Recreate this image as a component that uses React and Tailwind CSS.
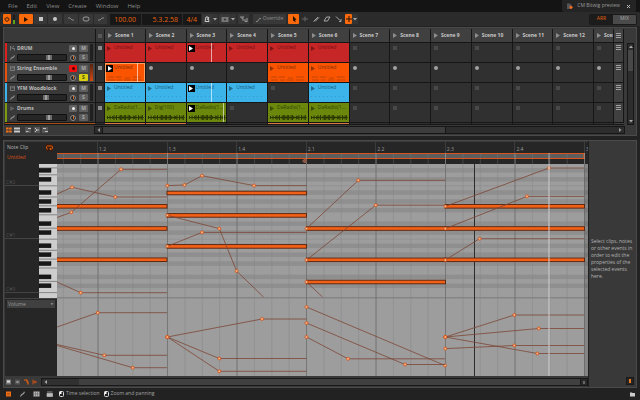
import React from "react";

const RED = "bg-[#c62626]";
const ORANGE = "bg-[#fb5400]";
const BLUE = "bg-[#3cb4ea]";
const GREEN = "bg-[#6b880c]";

const tracks = [
  {
    name: "DRUM", icon: "drum", stripe: "bg-[#e0201c]", color: RED, text: "text-[#701212]", fader: "28px", head: 24,
    clips: { 0: "Untitled", 1: "Untitled", 2: "Untitled", 3: "Untitled", 4: "Untitled", 5: "Untitled" }, playing: 2,
  },
  {
    name: "String Ensemble", icon: "keys", stripe: "bg-[#e8500c]", color: ORANGE, text: "text-[#7c2c04]", fader: "28px", armed: true, head: 32,
    clips: { 0: "Untitled", 4: "Untitled", 5: "Untitled" }, playing: 0, pattern: "notes",
  },
  {
    name: "YFM Woodblock", icon: "keys", stripe: "bg-[#3cb4ea]", color: BLUE, text: "text-[#1a5878]", fader: "25px", head: 24,
    clips: { 0: "Untitled", 1: "Untitled", 2: "Untitled", 3: "Untitled", 5: "Untitled" }, playing: 2, pattern: "dots",
  },
  {
    name: "Drums", icon: "audio", stripe: "bg-[#7c9c0c]", color: GREEN, text: "text-[#333f08]", fader: "28px", head: 36,
    clips: { 0: "DaRadio(1...", 1: "Dig(100)", 2: "DaRadio(1...", 4: "DaRadio(1...", 5: "DaRadio(1..." }, playing: 2, pattern: "wave",
  },
];

const columns = Array.from({ length: 13 }, (_, i) => i);
const sceneGrid = "grid min-w-0 flex-1 grid-cols-[repeat(12,minmax(0,1fr))_20px]";

function Triangle({ className = "" }) {
  return (
    <svg viewBox="0 0 4 5" className={"h-[5px] w-1 shrink-0 " + className} aria-hidden="true">
      <path d="M0 0L4 2.5L0 5Z" fill="currentColor" />
    </svg>
  );
}

function Arrow({ d, className = "" }) {
  return (
    <svg viewBox="0 0 4 4" className={"size-1 shrink-0 " + className} aria-hidden="true">
      <path d={d} fill="currentColor" />
    </svg>
  );
}

const DOWN = "M0 1H4L2 3.5Z";

function MenuBar() {
  return (
    <header className="flex h-3 shrink-0 items-center justify-between bg-[#141414]">
      <nav className="flex gap-[9px] pl-2 text-[6px] leading-3 text-[#8a8a8a]">
        {["File", "Edit", "View", "Create", "Window", "Help"].map((m) => (
          <button key={m} type="button">{m}</button>
        ))}
      </nav>
      <div className="mr-1 flex h-full items-center gap-1 rounded-b-xs bg-[#242424] pr-[5px] pl-[5px] text-[5px] text-[#9a9a9a]">
        <svg viewBox="0 0 6 6" className="size-[6px]" aria-hidden="true">
          <path d="M0 .5H3L4.5 2V6H0Z" fill="#555" />
          <circle cx="4" cy="4.2" r="1.5" fill="#f46a1c" />
        </svg>
        <span>CM Bitwig preview</span>
        <button type="button" aria-label="Close project" className="ml-[2px] text-[#bbb]">
          <svg viewBox="0 0 5 5" className="size-[5px]"><path d="M1 1L4 4M4 1L1 4" stroke="currentColor" /></svg>
        </button>
      </div>
    </header>
  );
}

function ToolButton({ label, active, width, children }) {
  return (
    <button
      type="button"
      aria-label={label}
      className={
        "flex h-[10px] shrink-0 items-center justify-center rounded-[1px] " +
        (active ? "bg-[#fb6a0a] text-[#261000] " : "bg-[#383838] text-[#aaa] ") +
        width
      }
    >
      {children}
    </button>
  );
}

function Glyph({ children }) {
  return (
    <svg viewBox="0 0 8 8" className="size-2 shrink-0" fill="none" stroke="currentColor" strokeWidth="1" aria-hidden="true">
      {children}
    </svg>
  );
}

function Toolbar() {
  return (
    <div className="flex h-[14px] shrink-0 items-center rounded-t-xs bg-[#2b2b2b] pr-1 pl-[3px]">
      <ToolButton label="Audio engine" active width="w-2">
        <Glyph><path d="M4 1.8V4M2.8 2.6a2 2 0 1 0 2.4 0" strokeWidth=".9" /></Glyph>
      </ToolButton>
      <div className="ml-[2px] flex h-[9px] w-[2px] items-end bg-[#1c1c1c]"><i className="h-1 w-full bg-[#5da51d]" /></div>
      <div className="ml-1 flex gap-px">
        <ToolButton label="Play" active width="w-[14px]"><Triangle /></ToolButton>
        <ToolButton label="Stop" width="w-[13px]"><i className="size-1 bg-[#c8c8c8]" /></ToolButton>
        <ToolButton label="Record" width="w-[14px]"><i className="size-1 rounded-full bg-[#c8c8c8]" /></ToolButton>
      </div>
      <div className="ml-[2px] flex gap-px">
        <ToolButton label="Punch in" width="w-[14px]"><Glyph><path d="M1 3H3L5 5H7" stroke="#888" /></Glyph></ToolButton>
        <ToolButton label="Loop" width="w-[14px]"><Glyph><rect x="1" y="2" width="6" height="4" rx="2" stroke="#999" /></Glyph></ToolButton>
        <ToolButton label="Punch out" width="w-[13px]"><Glyph><path d="M1 5H3L5 3H7" stroke="#888" /></Glyph></ToolButton>
      </div>
      <div className="mr-px ml-[3px] flex gap-px text-right text-[7px] leading-[11px] text-[#e8620e]">
        <output aria-label="Tempo" className="h-[11px] w-[31px] bg-[#171717] pr-[5px]">100.00</output>
        <output aria-label="Position" className="h-[11px] w-10 bg-[#171717] pr-1">5.3.2.58</output>
        <output aria-label="Time signature" className="h-[11px] w-[18px] bg-[#171717] pr-1">4/4</output>
      </div>
      <ToolButton label="Metronome" width="w-[10px]"><Glyph><path d="M2 6.5L3 2H5L6 6.5ZM4 5L6 2" stroke="#ccc" /></Glyph></ToolButton>
      <button type="button" aria-label="Metronome settings" className="h-[10px] w-[6px] bg-[#343434] pl-px text-[#aaa]"><Arrow d={DOWN} /></button>
      <div className="ml-px flex">
        <ToolButton label="Automation write" width="w-[11px]"><Glyph><rect x="1" y="2.5" width="6" height="4" fill="#777" stroke="#777" /><circle cx="4" cy="4.5" r="1" fill="#333" stroke="none" /></Glyph></ToolButton>
        <button type="button" aria-label="Automation options" className="h-[10px] w-[6px] bg-[#343434] pl-px text-[#aaa]"><Arrow d={DOWN} /></button>
      </div>
      <span className="ml-[2px] flex">
        <ToolButton label="Restore automation" width="w-[11px]"><Glyph><path d="M1 1V3H3M3 1V6M5 4V6.5H7.5M7 3V6" stroke="#999" /></Glyph></ToolButton>
      </span>
      <button type="button" className="ml-1 flex h-[10px] w-[33px] items-center justify-center gap-[2px] rounded-[1px] bg-[#383838] text-[5px] text-[#8c8c8c]">
        <svg viewBox="0 0 5 5" className="size-[5px]" aria-hidden="true"><path d="M0 4.5H1.5L3.5 1.5H5" fill="none" stroke="currentColor" /></svg>
        Override
      </button>
      <div className="ml-[2px] flex">
        <ToolButton label="Pointer tool" active width="w-[11px]"><Glyph><path d="M3 1L6.5 4.5L5 5L5.8 6.8L4.8 7L4 5.4L3 6.2Z" fill="currentColor" stroke="none" /></Glyph></ToolButton>
        <div className="flex h-[10px] items-center gap-[3px] pl-[2px] text-[#a8a8a8]">
          <button type="button" aria-label="Time selection tool"><Glyph><path d="M1 4H7M4 1.5V6.5" stroke="#666" /></Glyph></button>
          <button type="button" aria-label="Pen tool"><Glyph><path d="M1.5 6.5L6 2M3 6.5L7 2.5" /></Glyph></button>
          <button type="button" aria-label="Eraser tool"><Glyph><path d="M1 6L3.5 2H7L4.5 6Z" /></Glyph></button>
          <button type="button" aria-label="Knife tool"><Glyph><path d="M2 1.5L6 5.5M5 6.5H7V4" /></Glyph></button>
        </div>
      </div>
      <div className="ml-[3px] flex items-center">
        <ToolButton label="Snap" active width="w-[7px]"><Glyph><path d="M1 4H7M4 1V7" /></Glyph></ToolButton>
        <button type="button" aria-label="Snap options" className="h-[10px] w-[6px] bg-[#343434] pl-px text-[#aaa]"><Arrow d={DOWN} /></button>
      </div>
      <div className="-mr-px ml-auto flex h-[11px] w-12 overflow-hidden rounded-[2px] border border-[#1a1a1a] text-[5px]">
        <button type="button" aria-pressed="true" className="flex-1 bg-[#1c1c1c] text-[#e8620e]">ARR</button>
        <button type="button" aria-pressed="false" className="flex-1 bg-[#4a4a4a] text-[#a8a8a8]">MIX</button>
      </div>
    </div>
  );
}

function TrackIcon({ kind }) {
  return (
    <svg viewBox="0 0 5 5" className="size-[5px] shrink-0 text-[#8f8f8f]" fill="none" stroke="currentColor" strokeWidth=".7" aria-hidden="true">
      {kind === "drum" && <path d="M.5 0V4.5M2 .5V2.5H4.5V4.5M3 .5H4" />}
      {kind === "keys" && <path d="M.5 0V4.5H4.5V0M2 0V2.5M3.2 0V2.5" />}
      {kind === "audio" && <path d="M1 .5V4.5M2.2 1.5V3.5M3.4 2V3" />}
    </svg>
  );
}

function TrackHeader({ track }) {
  return (
    <div className={"flex h-5 border-b border-[#161616] " + (track.armed ? "bg-[#484848]" : "bg-[#393939]")}>
      <i className={"w-[2px] " + track.stripe} />
      <div className="flex min-w-0 flex-1 flex-col pt-px pl-[3px]">
        <div className="flex h-[9px] items-center gap-[2px]">
          <TrackIcon kind={track.icon} />
          <span className="w-[50px] text-[5px] leading-[9px] font-bold whitespace-nowrap text-[#bdbdbd]">{track.name}</span>
          <button type="button" aria-label={"Arm " + track.name} className={"flex h-[7px] w-2 items-center justify-center rounded-[1px] " + (track.armed ? "bg-[#f01010]" : "bg-[#626262]")}>
            <i className={"size-[3px] rounded-full " + (track.armed ? "bg-[#4c0000]" : "bg-[#eee]")} />
          </button>
          <button type="button" aria-label={"Mute " + track.name} className="h-[7px] w-[9px] rounded-[1px] bg-[#5e5e5e] text-[5px] leading-[7px] font-bold text-[#aaa]">M</button>
        </div>
        <div className="flex h-[9px] items-center gap-[2px]">
          <svg viewBox="0 0 5 5" className="size-[5px] shrink-0" aria-hidden="true"><path d="M.5 4.5L1.5 3L3.5 2L4.5 .5" fill="none" stroke="#909090" strokeWidth="1.2" /></svg>
          <div className="h-[7px] w-[50px] rounded-[1px] border border-[#101010] bg-[#262626]">
            <div className="relative h-full">
              <input type="range" aria-label={"Volume " + track.name} className="absolute inset-0 size-full opacity-0" />
              <i className="absolute top-0 h-[5px] w-[6px] border-x-2 border-[#6a6a6a] bg-[#a0a0a0]" style={{ left: track.fader }} />
            </div>
          </div>
          <i className="ml-px flex size-[6px] justify-center rounded-full border border-[#8c8c8c] bg-[#222]"><i className="h-[3px] w-px bg-[#d86a28]" /></i>
          <button type="button" aria-label={"Solo " + track.name} className={"ml-px h-[7px] w-[9px] rounded-[1px] text-[5px] leading-[7px] font-bold " + (track.armed ? "bg-[#d8d010] text-[#4c4a00]" : "bg-[#5e5e5e] text-[#aaa]")}>S</button>
        </div>
      </div>
      <div className="my-px mr-[2px] w-[3px] bg-[#202020]">
        {track.armed && <div className="h-full bg-linear-to-b from-[#5a2410] to-[#d8480c]" />}
      </div>
    </div>
  );
}

const WAVE = [3, 1, 4, 1, 3, 5, 2, 5, 1, 4, 5, 5, 3, 5, 5, 2, 5, 5, 3, 1, 4, 3, 5, 1, 5, 2, 4, 5];

function Pattern({ kind }) {
  return (
    <svg viewBox="0 0 40 8" preserveAspectRatio="none" className="h-2 w-full" aria-hidden="true">
      {kind === "notes" && <path d="M3 3H9M11 3H17M19 6H26M28 3H36M3 6H10M12 6H17M28 6H37M20 4H25" stroke="#8a3a10" strokeWidth=".7" opacity=".7" />}
      {kind === "dots" && <path d="M2 2.5H38" stroke="#1f6f98" strokeWidth=".6" strokeDasharray="1 3" opacity=".6" />}
      {kind === "wave" && (
        <g fill="#2c3804">
          <rect x="2" y="3" width="37" height="1" />
          {WAVE.map((h, i) => <rect key={i} x={2 + i * 1.3} y={3.5 - h / 2} width="1" height={h} />)}
        </g>
      )}
    </svg>
  );
}

function Cell({ track, col }) {
  const title = track.clips[col];
  const playing = track.playing === col;
  if (!title) {
    return (
      <div className="border-r border-b border-[#161616] bg-[#303030] pt-[3px] pl-[3px]">
        {track.armed
          ? <i className="block size-1 rounded-full bg-[#a0a0a0]" />
          : <i className="block size-1 bg-[#484848]" />}
      </div>
    );
  }
  return (
    <div className="border-r border-b border-[#161616]">
      <div className={"relative flex h-full flex-col justify-between overflow-hidden " + track.color + (playing && track.armed ? " outline -outline-offset-1 outline-[#ffa060]" : "")}>
        <button type="button" className={"flex h-[10px] items-center text-[5px] whitespace-nowrap " + (playing ? "gap-px pl-px " : "gap-[3px] pl-[2px] ") + track.text}>
          {playing
            ? <i className="flex size-[7px] items-center justify-center bg-black text-white"><Triangle /></i>
            : <Triangle className="opacity-80" />}
          {title}
        </button>
        {track.pattern && <Pattern kind={track.pattern} />}
        {playing && <i className="absolute inset-y-0 w-px bg-[#fff9]" style={{ left: track.head }} />}
      </div>
    </div>
  );
}

function Stack() {
  return (
    <svg viewBox="0 0 5 6" className="h-[6px] w-[5px]" aria-hidden="true">
      <path d="M0 .5H5M0 2.5H5M0 4.5H5" stroke="#a0a0a0" />
    </svg>
  );
}

function Launcher() {
  return (
    <section className="mx-[3px] flex shrink-0 flex-col border border-[#4a4a4a] bg-[#393939] pt-px">
      <div className="flex">
        <div className="flex min-w-0 flex-1 flex-col">
          <div className="flex h-[14px] pl-px">
            <div className="w-[90px] shrink-0 border-b border-[#161616]" />
            <div className="flex w-[10px] shrink-0 items-center justify-center border border-t-0 border-[#161616]"><i className="size-1 bg-[#585858]" /></div>
            <div className={sceneGrid}>
              {columns.map((i) => (
                <button key={i} type="button" className="flex items-center gap-[3px] overflow-hidden border-r border-b border-[#161616] bg-[#404040] pl-[3px] text-[5px] font-bold whitespace-nowrap text-[#c8c8c8]">
                  <Triangle className="text-[#8d8d8d]" />
                  {"Scene " + (i + 1)}
                </button>
              ))}
            </div>
            <div className="flex w-[10px] shrink-0 items-center justify-center border-r border-b border-[#161616] bg-[#444]"><Stack /></div>
          </div>
          {tracks.map((t) => (
            <div key={t.name} className="flex h-5 pl-px">
              <div className="w-[90px] shrink-0"><TrackHeader track={t} /></div>
              <div className="flex w-[10px] shrink-0 justify-center border-x border-b border-[#161616] bg-[#303030] pt-[3px]"><i className="size-1 bg-[#8a8a8a]" /></div>
              <div className={sceneGrid}>
                {columns.map((i) => <Cell key={i} track={t} col={i} />)}
              </div>
              <div className="flex w-[10px] shrink-0 justify-center border-r border-b border-[#161616] bg-[#404040] pt-[2px]"><Stack /></div>
            </div>
          ))}
          <div className="flex h-[2px] border-b border-[#161616] pl-px">
            <i className="w-[90px] shrink-0 bg-[#a85018]" />
            <i className="w-[10px] shrink-0 bg-[#303030]" />
            <div className={sceneGrid}>
              {columns.map((i) => <i key={i} className={"border-r border-[#161616] " + ([0, 1, 4, 5].includes(i) ? "bg-[#d87840]" : "bg-[#303030]")} />)}
            </div>
            <i className="w-[10px] shrink-0 bg-[#404040]" />
          </div>
        </div>
        <div className="mt-[14px] mr-[2px] ml-[3px] flex w-[7px] shrink-0 flex-col items-center border border-[#161616] bg-[#2d2d2d] text-[#aaa]">
          <Arrow d="M0 3H4L2 .5Z" className="my-px" />
          <i className="h-[21px] w-full bg-[#484848]" />
          <Arrow d={DOWN} className="mt-auto mb-px" />
        </div>
      </div>
      <div className="flex h-[10px] items-center pr-[11px] pl-[2px]">
        <div className="flex w-[88px] shrink-0 items-center text-[#c8c8c8]">
          <svg viewBox="0 0 44 6" className="h-[6px] w-11" aria-hidden="true">
            <path d="M0 1.5H6M0 4.5H6" stroke="#f07018" strokeWidth="2" strokeDasharray="2.6 .5" />
            <path d="M8 1.5H14M8 4.5H14" stroke="#c8c8c8" strokeWidth="2" />
            <g fill="none" stroke="#c0c0c0">
              <rect x="19.5" y=".5" width="5" height="5" stroke="#555" fill="#555" />
              <rect x="28.5" y=".5" width="5" height="5" stroke="#555" fill="#555" />
              <rect x="36.5" y=".5" width="5" height="5" stroke="#555" fill="#555" />
              <path d="M20 4.5H22.5M22 1.5H25M29 1L31 3L29 5M32 2V4M37 1.5H40M39 4.5H42" />
            </g>
          </svg>
        </div>
        <div className="flex h-2 min-w-0 flex-1 items-center border border-[#161616] bg-[#2d2d2d] text-[#999]">
          <span className="flex w-[7px] shrink-0 justify-center"><Arrow d="M3 0V4L.5 2Z" /></span>
          <i className="h-full w-[65%] border-x border-[#161616] bg-[#3d3d3d]" />
          <Arrow d="M1 0V4L3.5 2Z" className="mr-[2px] ml-auto" />
        </div>
      </div>
    </section>
  );
}

/* Editor canvas, 531 x 234. The ruler takes the first 22 rows and the volume lane starts at row 156. */
const ROW = 53.4 / 12;
const blackRows = [6.3, 15.3, 28.5, 37.5, 46.2, 59.7, 68.6, 81.8, 90.7, 99.6, 112.9, 121.8];
const beatX = Array.from({ length: 8 }, (_, i) => 41 + i * 69.5);
const fineX = Array.from({ length: 31 }, (_, i) => 6.3 + i * 17.375);

const notes = [
  [-2, 112, 42.3], [-2, 112, 64.5], [-2, 112, 95.7],
  [110, 139.5, 29], [110, 139.5, 51.4], [110, 139.5, 82.4],
  [249.5, 139, 64.5], [249.5, 139, 95.8], [249.5, 139, 118],
  [388, 139.5, 42.3], [388, 139.5, 64.5], [388, 139.5, 95.8],
];

const curves = [
  [[0, 30], [15, 23.3], [58.3, 33], [110, 33]],
  [[0, 53.5], [14.3, 48.3], [64, 5.3], [110, 5.3]],
  [[0, 118], [23.7, 128.7], [110, 128.7]],
  [[0, 163], [40.8, 148.7], [110, 148.7]],
  [[0, 180.5], [47.3, 191.3], [110, 191.3]],
  [[0, 181.5], [75.7, 203.7], [110, 203.7]],
  [[110.3, 21.6], [127.5, 21], [145, 11.7], [197, 21.6], [249.5, 21.6]],
  [[110.3, 51.3], [162.3, 64.6], [179.6, 107], [206.5, 133]],
  [[110.3, 82.3], [145, 68.4], [249.5, 68.4]],
  [[110.3, 173], [205, 155], [249.5, 155]],
  [[110.3, 173], [162.3, 194.5], [249.5, 194.5]],
  [[110.3, 173], [162.3, 207.3], [249.5, 207.3]],
  [[249.5, 64.6], [301.3, 16.3], [388, 16.3]],
  [[249.5, 96], [318.7, 41.2], [388, 41.2]],
  [[249.5, 118], [265.5, 133]],
  [[249.5, 143], [388, 201.5], [388, 201.5]],
  [[249.5, 159], [348, 200.5], [388, 200.5]],
  [[249.5, 173], [291, 194.8], [388, 194.8]],
  [[388.3, 42.4], [492, 4], [527, 4]],
  [[388.3, 64.6], [470, 32.4], [527, 32.4]],
  [[388.3, 96], [422.6, 74.7], [527, 74.7]],
  [[388.3, 173], [457.3, 151], [527, 151]],
  [[388.3, 173], [481.7, 164.5], [527, 164.5]],
  [[388.3, 173], [480.3, 189.5], [527, 189.5]],
  [[388.3, 184.6], [457.3, 181.5], [527, 181.5]],
];

function Ruler() {
  return (
    <div className="flex h-[22px] flex-col bg-[#262626]">
      <div className="grid h-[11px] grid-cols-[repeat(7,minmax(0,1fr))_4px] pl-10 text-[5px] leading-[14px] text-[#9c9c9c]">
        {["1.2", "1.3", "1.4", "2.1", "2.2", "2.3", "2.4", "3"].map((b) => (
          <span key={b} className="border-l border-[#3c3c3c] pl-px">{b}</span>
        ))}
      </div>
      <svg viewBox="0 0 531 11" preserveAspectRatio="none" className="h-[11px] w-full" aria-hidden="true">
        <rect x="0" y="0" width="527.5" height="6" fill="#5e5e5e" />
        <path d="M0 .5H527.5M0 5.5H527.5" stroke="#d8541a" strokeWidth="1" />
        <path d="M527 0V6" stroke="#e8560e" />
        {fineX.map((x) => <path key={x} d={"M" + x + " 0V11"} stroke="#7c7c7c" strokeWidth=".7" opacity=".5" />)}
        {beatX.map((x) => <path key={x} d={"M" + x + " 0V11"} stroke="#aaa" strokeWidth=".7" opacity=".7" />)}
        <path d="M250 6V10H247L245 8L247 6Z" fill="#8a5a48" />
        <path d="M492 0V11" stroke="#bbb" opacity=".8" />
      </svg>
    </div>
  );
}

function Canvas() {
  return (
    <svg viewBox="0 0 531 212" preserveAspectRatio="none" className="block h-[212px] w-full" role="img" aria-label="Notes and volume">
      <rect width="531" height="212" fill="#9d9d9d" />
      {blackRows.map((y) => <rect key={y} y={y - ROW / 2} width="531" height={ROW} fill="#8f8f8f" />)}
      <path d="M0 21.8H531M0 75.2H531" stroke="#888" strokeWidth=".5" />
      <path d="M0 133.8H531" stroke="#858585" strokeWidth="1.5" />
      {fineX.map((x) => <path key={x} d={"M" + x + " 0V212"} stroke="#878787" strokeWidth=".5" />)}
      {beatX.map((x) => <path key={x} d={"M" + x + " 0V212"} stroke="#6c6c6c" strokeWidth=".7" />)}
      <rect x="527.5" width="3.5" height="212" fill="#000" opacity=".15" />
      <path d="M417.5 0V212" stroke="#2c2c2c" />
      {notes.map(([x, w, y]) => (
        <rect key={x + "-" + y} x={x} y={y - 1.8} width={w} height="3.6" fill="#f26018" stroke="#55230c" strokeWidth=".9" />
      ))}
      {curves.map((pts, i) => (
        <g key={i}>
          <polyline points={pts.map((p) => p.join(",")).join(" ")} fill="none" stroke="#7c4636" strokeWidth=".8" />
          {pts.slice(0, -1).filter((p) => p[0] > 0).map((p) => (
            <rect key={p.join()} x={p[0] - 1.3} y={p[1] - 1.3} width="2.6" height="2.6" rx=".7" fill="#ffc090" stroke="#d4521a" strokeWidth=".9" />
          ))}
        </g>
      ))}
      <path d="M492 0V212" stroke="#d0d0d0" strokeWidth="1.6" opacity=".65" />
    </svg>
  );
}

const whiteEdges = [3.9, 10.8, 21.8, 33, 41.8, 50.8, 64.2, 75.2, 86.3, 95.1, 104, 117.4, 128.6];

function Keyboard() {
  return (
    <svg viewBox="0 0 18 134" className="h-[134px] w-[18px] shrink-0" aria-hidden="true">
      <rect width="18" height="134" fill="#cdcdcd" />
      {whiteEdges.map((y) => <path key={y} d={"M0 " + y + "H18"} stroke="#666" strokeWidth=".7" />)}
      {blackRows.map((y) => <rect key={y} x="0" y={y - 2} width="12" height="4" fill="#181818" stroke="#000" strokeWidth=".4" />)}
    </svg>
  );
}

function Editor() {
  return (
    <section className="mx-[3px] mt-1 flex flex-1 border border-[#4a4a4a] bg-[#393939]">
      <div className="flex min-w-0 flex-1 flex-col pt-px pl-px">
        <div className="flex">
          <div className="flex w-[52px] shrink-0 flex-col bg-[#262626] text-[5px]">
            <div className="flex h-[22px] flex-col pl-[2px]">
              <div className="flex h-[11px] items-center justify-between pr-1">
                <span className="text-[#b4b4b4]">Note Clip</span>
                <button type="button" aria-label="Loop clip" className="flex size-[7px] items-center justify-center bg-[#3c1c0c]">
                  <svg viewBox="0 0 7 5" className="h-[5px] w-[7px]"><path d="M2 4H1.5a1 1 0 0 1-1-1V2a1 1 0 0 1 1-1h4a1 1 0 0 1 1 1V3a1 1 0 0 1-1 1H4M5 2.8L3.8 4L5 5" fill="none" stroke="#e8620e" strokeWidth=".9" /></svg>
                </button>
              </div>
              <span className="leading-[9px] text-[#d8521a]">Untitled</span>
            </div>
            <div className="flex">
              <div className="flex h-[134px] flex-1 flex-col text-[5px] text-[#505050]">
                <span className="h-[22px] border-b border-[#444] pt-[15px] pl-px leading-[7px]">C#2</span>
                <span className="h-[53px] border-b border-[#444] pt-[46px] pl-px leading-[7px]">C#1</span>
                <span className="h-[54px] border-b border-[#444] pt-[47px] pl-px leading-[7px]">C#0</span>
              </div>
              <Keyboard />
            </div>
            <div className="h-[78px] border-t border-[#444] pt-px pl-[2px]">
              <div className="relative h-2 w-12 bg-[#404040] text-[#9a9a9a]">
                <select aria-label="Lane" className="block h-2 w-full appearance-none bg-transparent pl-px text-[5px] leading-2">
                  <option>Volume</option>
                </select>
                <Arrow d="M.5 1.2H3.5L2 3Z" className="pointer-events-none absolute top-[2px] right-px" />
              </div>
            </div>
          </div>
          <div className="min-w-0 flex-1">
            <Ruler />
            <Canvas />
          </div>
        </div>
        <div className="mt-px flex h-[10px] items-center">
          <svg viewBox="0 0 36 8" className="h-2 w-9 shrink-0" aria-hidden="true">
            <rect x="1" y="1.5" width="5" height="5" fill="#777" /><rect x="2" y="2.5" width="3" height="2" fill="#ddd" />
            <rect x="10" y="1.5" width="5" height="5" fill="#555" /><rect x="11.5" y="3" width="2" height="2" fill="#999" />
            <path d="M19 2H22V4H23V6.5" fill="none" stroke="#e8620e" strokeWidth="1.2" />
            <path d="M28 1.5V6.5M28 4H32M30 2.5V5.5" fill="none" stroke="#c8521a" />
          </svg>
          <div className="flex h-2 min-w-0 flex-1 items-center border border-[#181818] bg-[#404040] text-[#aaa]">
            <span className="flex h-full w-[37px] items-center bg-[#303030] pl-[2px]"><Arrow d="M3 0V4L.5 2Z" /></span>
            <span className="ml-auto flex h-full w-[7px] items-center justify-center border-l border-[#181818] bg-[#2a2a2a]"><i className="h-[3px] w-[2px] bg-[#666]" /></span>
          </div>
        </div>
      </div>
      <aside className="flex w-12 shrink-0 flex-col justify-between border-l border-[#202020] pt-[97px] pb-[2px] pl-[2px] text-[5px] leading-[7px] text-[#b4b4b4]">
        <p>Select clips, notes or other events in order to edit the properties of the selected events here.</p>
        <button type="button" aria-label="Inspector" className="mr-[2px] flex size-2 items-center justify-center self-end border border-[#1a1a1a] bg-[#252525]">
          <i className="h-1 w-[2px] bg-[#f07818]" />
        </button>
      </aside>
    </section>
  );
}

function MouseIcon() {
  return (
    <svg viewBox="0 0 5 6" className="h-[6px] w-[5px]" aria-hidden="true">
      <rect x=".5" y=".5" width="4" height="5" rx="1" fill="none" stroke="#ddd" />
      <path d="M.5 .5H2.5V3H.5Z" fill="#fff" />
    </svg>
  );
}

function StatusBar() {
  return (
    <footer className="flex h-3 shrink-0 items-center pr-[5px] pl-[6px] text-[5px] text-[#a4a4a4]">
      <svg viewBox="0 0 47 6" className="h-[6px] w-[47px]" aria-hidden="true">
        <rect x="0" y=".5" width="5" height="5" fill="#f07018" />
        <path d="M1 2.5H4M1 4H4" stroke="#8a3a08" strokeWidth=".5" />
        <path d="M14.5 5.5L15.5 3.8L17.5 2.6L18.5 .8" fill="none" stroke="#999" strokeWidth="1.2" />
        <rect x="27.5" y=".5" width="6" height="5" fill="#b8b8b8" />
        <path d="M29.5 .5V5.5M31.5 .5V5.5M27.5 3H33.5" stroke="#555" strokeWidth=".5" />
        <path d="M41 1H46.5M41 2.5H46.5V5.5H41Z" fill="#bbb" stroke="#bbb" strokeWidth=".7" />
      </svg>
      <div className="ml-[6px] flex items-center gap-[2px]"><MouseIcon />Time selection</div>
      <div className="ml-1 flex items-center gap-[2px]"><MouseIcon />Zoom and panning</div>
      <svg viewBox="0 0 5 5" className="ml-auto size-[5px]" aria-hidden="true"><path d="M0 .5H2L2.5 1H5V4.5H0Z" fill="#ccc" /></svg>
    </footer>
  );
}

export default function App() {
  return (
    <div className="flex min-h-screen flex-col bg-[#222] font-['Open_Sans','Noto_Sans',sans-serif]">
      <MenuBar />
      <Toolbar />
      <main className="flex flex-1 flex-col pt-px">
        <Launcher />
        <Editor />
      </main>
      <StatusBar />
    </div>
  );
}
